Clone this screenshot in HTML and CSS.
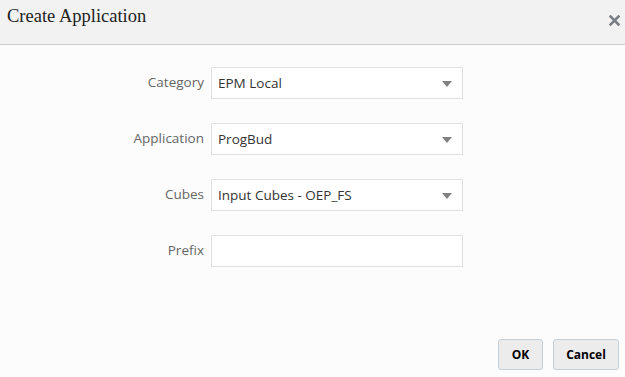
FILE: index.html
```html
<!DOCTYPE html>
<html>
<head>
<meta charset="utf-8">
<link rel="stylesheet" href="styles.css">
</head>
<body>
<div class="dialog">
  <header class="dlg-header">
    <h1 class="dlg-title">Create Application</h1>
    <svg class="dlg-close" width="11" height="11" viewBox="0 0 11 11" aria-label="Close">
      <path d="M1.5 1.5 L9.5 9.5 M9.5 1.5 L1.5 9.5" stroke="#7a7f85" stroke-width="2.6" stroke-linecap="square" fill="none"/>
    </svg>
  </header>
  <main class="dlg-body">
    <div class="form">
      <div class="row">
        <label class="lbl">Category</label>
        <div class="field select"><span class="val">EPM Local</span><span class="arrow"></span></div>
      </div>
      <div class="row">
        <label class="lbl">Application</label>
        <div class="field select"><span class="val">ProgBud</span><span class="arrow"></span></div>
      </div>
      <div class="row">
        <label class="lbl">Cubes</label>
        <div class="field select"><span class="val">Input Cubes - OEP_FS</span><span class="arrow"></span></div>
      </div>
      <div class="row">
        <label class="lbl">Prefix</label>
        <div class="field"></div>
      </div>
    </div>
  </main>
  <footer class="dlg-footer">
    <button class="btn btn-ok">OK</button>
    <button class="btn btn-cancel">Cancel</button>
  </footer>
</div>
</body>
</html>
```

FILE: styles.css
```css
html, body {
  margin: 0;
  padding: 0;
  width: 625px;
  height: 377px;
  overflow: hidden;
  background: #fcfcfc;
}
.dialog {
  display: flex;
  flex-direction: column;
  height: 377px;
  font-family: "Open Sans", "DejaVu Sans", sans-serif;
}
.dlg-header {
  height: 45px;
  box-sizing: border-box;
  background: #f2f2f2;
  border-bottom: 1px solid #cccccc;
  display: flex;
  align-items: flex-start;
  justify-content: space-between;
  padding: 0 5px 0 7px;
}
.dlg-title {
  margin: 3px 0 0 0;
  font-family: "Liberation Serif", "Times New Roman", serif;
  font-weight: normal;
  font-size: 18.5px;
  line-height: 26px;
  color: #222222;
}
.dlg-close {
  margin-top: 15px;
  display: block;
}
.dlg-body {
  flex: 1;
  padding-top: 22px;
}
.form {
  display: flex;
  flex-direction: column;
  gap: 24px;
}
.row {
  display: flex;
  align-items: center;
  gap: 7px;
}
.lbl {
  width: 204px;
  text-align: right;
  font-size: 13.5px;
  color: #666666;
  margin-top: -3px;
}
.field {
  width: 252px;
  height: 32px;
  box-sizing: border-box;
  background: #ffffff;
  border: 1px solid #e0e0e0;
  display: flex;
  align-items: center;
  justify-content: space-between;
  padding: 0 10px 0 6px;
}
.val {
  font-size: 13.5px;
  color: #333333;
}
.arrow {
  width: 0;
  height: 0;
  border-left: 5px solid transparent;
  border-right: 5px solid transparent;
  border-top: 6px solid #808080;
  margin-top: 2px;
}
.dlg-footer {
  display: flex;
  justify-content: flex-end;
  gap: 10px;
  padding: 0 6px 7px 0;
}
.btn {
  height: 31px;
  box-sizing: border-box;
  background: #ececec;
  border: 1px solid #c4ced8;
  border-radius: 3px;
  font-family: "Open Sans", "DejaVu Sans", sans-serif;
  font-weight: bold;
  font-size: 12px;
  color: #000000;
  padding: 0;
}
.btn-ok { width: 45px; }
.btn-cancel { width: 66px; }
```
